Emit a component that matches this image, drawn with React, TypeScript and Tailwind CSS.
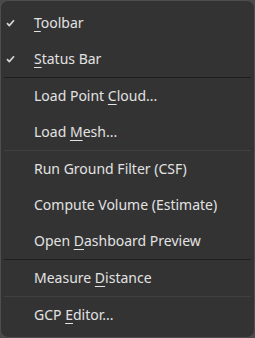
import React from 'react';

type Item = { label: string; key?: number; checked?: boolean } | { sep: 'dark' | 'light' };

const items: Item[] = [
  { label: 'Toolbar', key: 0, checked: true },
  { label: 'Status Bar', key: 0, checked: true },
  { sep: 'dark' },
  { label: 'Load Point Cloud...', key: 11 },
  { label: 'Load Mesh...', key: 5 },
  { sep: 'light' },
  { label: 'Run Ground Filter (CSF)' },
  { label: 'Compute Volume (Estimate)' },
  { label: 'Open Dashboard Preview', key: 5 },
  { sep: 'dark' },
  { label: 'Measure Distance', key: 8 },
  { sep: 'light' },
  { label: 'GCP Editor...', key: 4 },
];

const Check = () => (
  <svg width="9" height="8" viewBox="0 0 9 8" className="text-[#d4d4d4]">
    <path d="M1 4.2 L3.3 6.6 L8 1.2" fill="none" stroke="currentColor" strokeWidth="1.7" strokeLinejoin="round" />
  </svg>
);

const Label = ({ label, k }: { label: string; k?: number }) => {
  if (k === undefined) return <>{label}</>;
  return (
    <>
      {label.slice(0, k)}
      <span className="underline underline-offset-[3px] decoration-1">{label[k]}</span>
      {label.slice(k + 1)}
    </>
  );
};

export default function App() {
  return (
    <div className="w-[255px] h-[338px] bg-[#4a4a4a]">
      <div
        className="w-full h-full rounded-[8px] border border-[#4e4e4e] bg-[#333333] pt-[4px] text-[14px] text-[#e2e2e2]"
        style={{ fontFamily: '"Noto Sans", "Open Sans", sans-serif' }}
      >
        {items.map((it, i) =>
          'sep' in it ? (
            <div
              key={i}
              className={
                it.sep === 'dark'
                  ? 'mx-[3px] h-px bg-[#1e1e1e]'
                  : 'mx-[3px] h-px bg-[#404040]'
              }
            />
          ) : (
            <div key={i} className="flex h-[36px] items-center">
              <div className="w-[33px] pl-[5px]">{it.checked && <Check />}</div>
              <span className="leading-none">
                <Label label={it.label} k={it.key} />
              </span>
            </div>
          )
        )}
      </div>
    </div>
  );
}
